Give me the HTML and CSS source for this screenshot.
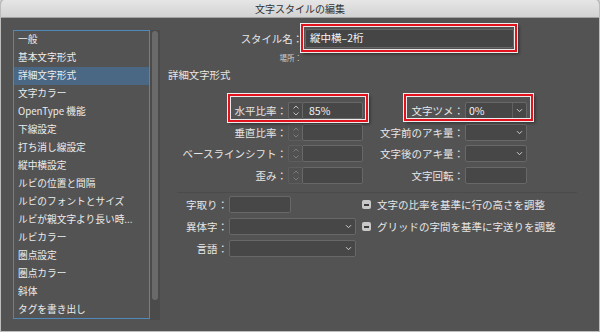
FILE: index.html
```html
<!DOCTYPE html>
<html lang="ja">
<head>
<meta charset="utf-8">
<title>文字スタイルの編集</title>
<link rel="stylesheet" href="styles.css">
</head>
<body>
<div class="window">
  <div class="titlebar">文字スタイルの編集</div>
  <div class="content">
    <div class="sidebar">
      <ul class="list">
        <li>一般</li>
        <li>基本文字形式</li>
        <li class="sel">詳細文字形式</li>
        <li>文字カラー</li>
        <li>OpenType 機能</li>
        <li>下線設定</li>
        <li>打ち消し線設定</li>
        <li>縦中横設定</li>
        <li>ルビの位置と間隔</li>
        <li>ルビのフォントとサイズ</li>
        <li>ルビが親文字より長い時...</li>
        <li>ルビカラー</li>
        <li>圏点設定</li>
        <li>圏点カラー</li>
        <li>斜体</li>
        <li>タグを書き出し</li>
      </ul>
      <div class="scrollbar"><div class="thumb"></div></div>
    </div>
    <div class="main">
      <div class="name-row">
        <span class="name-label">スタイル名：</span>
        <div class="name-field hl hl-name">縦中横–2桁</div>
      </div>
      <div class="place-row">場所：</div>
      <div class="section-title">詳細文字形式</div>

      <div class="grid">
        <span class="lbl hl hl-left">水平比率：</span>
        <span class="spin"><svg width="8" height="13" viewBox="0 0 8 13"><path d="M1.5 4.5 L4 2 L6.5 4.5 M1.5 8.5 L4 11 L6.5 8.5"/></svg></span>
        <span class="field">85%</span>
        <span class="lbl hl hl-right">文字ツメ：</span>
        <span class="select"><span class="val">0%</span><span class="chev div"><svg width="7" height="5" viewBox="0 0 7 5"><path d="M1 1.2 L3.5 3.7 L6 1.2"/></svg></span></span>

        <span class="lbl">垂直比率：</span>
        <span class="spin dis"><svg width="8" height="13" viewBox="0 0 8 13"><path d="M1.5 4.5 L4 2 L6.5 4.5 M1.5 8.5 L4 11 L6.5 8.5"/></svg></span>
        <span class="field"></span>
        <span class="lbl">文字前のアキ量：</span>
        <span class="select"><span class="val"></span><span class="chev"><svg width="7" height="5" viewBox="0 0 7 5"><path d="M1 1.2 L3.5 3.7 L6 1.2"/></svg></span></span>

        <span class="lbl">ベースラインシフト：</span>
        <span class="spin dis"><svg width="8" height="13" viewBox="0 0 8 13"><path d="M1.5 4.5 L4 2 L6.5 4.5 M1.5 8.5 L4 11 L6.5 8.5"/></svg></span>
        <span class="field"></span>
        <span class="lbl">文字後のアキ量：</span>
        <span class="select"><span class="val"></span><span class="chev"><svg width="7" height="5" viewBox="0 0 7 5"><path d="M1 1.2 L3.5 3.7 L6 1.2"/></svg></span></span>

        <span class="lbl">歪み：</span>
        <span class="spin dis"><svg width="8" height="13" viewBox="0 0 8 13"><path d="M1.5 4.5 L4 2 L6.5 4.5 M1.5 8.5 L4 11 L6.5 8.5"/></svg></span>
        <span class="field"></span>
        <span class="lbl">文字回転：</span>
        <span class="field"></span>
      </div>

      <div class="sep"></div>

      <div class="grid2">
        <span class="lbl">字取り：</span>
        <span class="field short"></span>
        <span></span>
        <span class="check"><span class="cb"></span>文字の比率を基準に行の高さを調整</span>

        <span class="lbl">異体字：</span>
        <span class="select"><span class="val"></span><span class="chev"><svg width="7" height="5" viewBox="0 0 7 5"><path d="M1 1.2 L3.5 3.7 L6 1.2"/></svg></span></span>
        <span></span>
        <span class="check"><span class="cb"></span>グリッドの字間を基準に字送りを調整</span>

        <span class="lbl">言語：</span>
        <span class="select"><span class="val"></span><span class="chev"><svg width="7" height="5" viewBox="0 0 7 5"><path d="M1 1.2 L3.5 3.7 L6 1.2"/></svg></span></span>
      </div>
    </div>
  </div>
</div>
</body>
</html>
```

FILE: styles.css
```css
* { box-sizing: border-box; margin: 0; padding: 0; }
html, body { width: 600px; height: 332px; overflow: hidden; }
body {
  background: #cfcfcf;
  font-family: "Noto Sans CJK JP", "Noto Sans", sans-serif;
  color: #e6e6e6;
}
.window {
  width: 600px;
  height: 332px;
  display: flex;
  flex-direction: column;
  background: #535353;
  border: 1px solid #bdbdbd;
  border-top: none;
  border-radius: 4px 4px 0 0;
  overflow: hidden;
}
.titlebar {
  flex: none;
  height: 18px;
  background: linear-gradient(#e6e6e6, #d2d2d2);
  border-bottom: 1px solid #a2a2a2;
  color: #333;
  font-size: 10px;
  line-height: 17px;
  text-align: center;
}
.content {
  flex: 1;
  display: flex;
  padding-left: 12px;
}
.sidebar {
  display: flex;
  align-items: flex-start;
  margin-top: 12px;
}
.list {
  list-style: none;
  width: 137px;
  height: 289px;
  border: 1px solid #4f88bb;
  overflow: hidden;
  font-size: 9.7px;
}
.list li {
  height: 18px;
  line-height: 17px;
  padding-left: 4px;
  white-space: nowrap;
  color: #ececec;
}
.list li.sel { background: #4a6884; }
.scrollbar {
  width: 10px;
  height: 290px;
  background: #4b4b4b;
  padding: 1px 2px 0 2px;
}
.thumb {
  height: 269px;
  background: #6a6a6a;
  border-radius: 3px;
}
.main {
  flex: 1;
  padding-top: 11px;
  font-size: 10.5px;
}
.name-row {
  display: flex;
  align-items: center;
  height: 19px;
}
.name-label {
  width: 143px;
  text-align: right;
  font-size: 10.4px;
  white-space: nowrap;
}
.name-field {
  margin-left: 2px;
  width: 209px;
  height: 19px;
  border: 1px solid #666;
  border-radius: 2px;
  background: #454545;
  padding-left: 4px;
  line-height: 16px;
  color: #f4f4f4;
}
.place-row {
  margin-top: 5px;
  width: 142px;
  height: 10px;
  text-align: right;
  font-size: 7.5px;
  line-height: 10px;
  color: #cfcfcf;
}
.section-title {
  margin-top: 5px;
  padding-left: 8px;
  height: 14px;
  line-height: 14px;
  font-size: 10.4px;
}
.grid {
  margin-top: 20px;
  display: grid;
  grid-template-columns: 128px 14px 61px 102px 62px;
  grid-auto-rows: 17px;
  row-gap: 4.5px;
  align-items: center;
}
.lbl {
  text-align: right;
  padding-right: 1px;
  white-space: nowrap;
  line-height: 17px;
}
.spin {
  height: 17px;
  border: 1px solid #666;
  border-right: none;
  border-radius: 2px 0 0 2px;
  background: #4a4a4a;
  display: flex;
  align-items: center;
  justify-content: center;
}
.spin svg path { fill: none; stroke: #bdbdbd; stroke-width: 1; }
.spin.dis { border-color: #5d5d5d; background: #515151; }
.spin.dis svg path { stroke: #7c7c7c; }
.field {
  height: 17px;
  border: 1px solid #686868;
  border-radius: 2px;
  background: #474747;
  padding-left: 6px;
  line-height: 15px;
  color: #f4f4f4;
}
.field.short { width: 62px; }
.select {
  height: 17px;
  display: flex;
  border: 1px solid #686868;
  border-radius: 2px;
  background: #474747;
  color: #f4f4f4;
}
.select .val {
  flex: 1;
  padding-left: 3px;
  line-height: 15px;
}
.chev {
  width: 14px;
  display: flex;
  align-items: center;
  justify-content: center;
}
.chev.div { border-left: 1px solid #606060; }
.chev svg path { fill: none; stroke: #cfcfcf; stroke-width: 1; }
.sep {
  margin: 8.5px 0 0 17px;
  width: 400px;
  height: 1px;
  background: #4b4b4b;
}
.grid2 {
  margin-top: 3px;
  display: grid;
  grid-template-columns: 69px 127px 6px auto;
  grid-auto-rows: 17px;
  row-gap: 5px;
  align-items: center;
}
.check {
  display: flex;
  align-items: center;
  gap: 6px;
  white-space: nowrap;
  line-height: 17px;
}
.cb {
  width: 9px;
  height: 9px;
  border-radius: 2px;
  background: #c8c8c8;
  display: flex;
  align-items: center;
  justify-content: center;
}
.cb::before {
  content: "";
  width: 5px;
  height: 2px;
  background: #3c3c3c;
}
/* red annotation frames laid over the controls */
.hl { position: relative; }
.hl::after {
  content: "";
  position: absolute;
  border: 2px solid #e3121c;
  box-shadow: 0 0 0 1px #ececec, inset 0 0 0 1px #ececec, 2px 2px 3px rgba(0, 0, 0, 0.45);
  pointer-events: none;
}
.hl-name::after { left: -5px; right: -4px; top: -6px; bottom: -5px; }
.hl-left::after { left: 68px; right: -80px; top: -8px; bottom: -3px; }
.hl-right::after { left: 41px; right: -68px; top: -8px; bottom: -2px; }
```
